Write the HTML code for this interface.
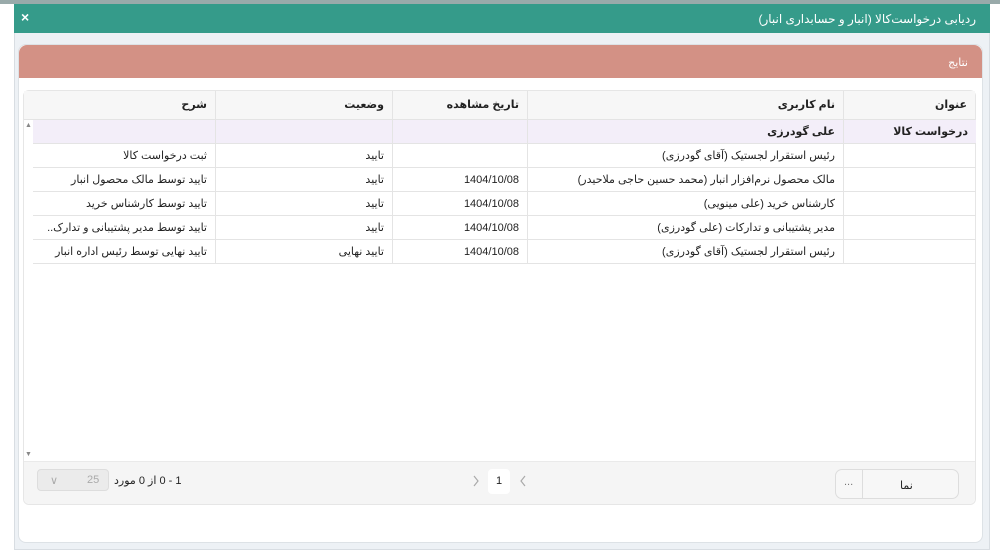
<!DOCTYPE html>
<html><head><meta charset="utf-8"><style>
*{box-sizing:border-box;margin:0;padding:0}
body{width:1000px;height:550px;background:#fff;position:relative;overflow:hidden;font-family:"Liberation Sans","DejaVu Sans",sans-serif;font-size:11px;color:#222}
.a{position:absolute}
.top{left:0;top:0;width:1000px;height:4px;background:#9aa}
.modal{left:14px;top:4px;width:976px;height:546px;background:#edf1f5;border:1px solid #d8dde2}
.hdr{left:14px;top:4px;width:976px;height:29px;background:#359b8a;color:#fff}
.panel{left:18px;top:44px;width:965px;height:499px;background:#fff;border-radius:8px;border:1px solid #dde2e6}
.sal{left:19px;top:45px;width:963px;height:33px;background:#d39185;border-radius:8px 8px 0 0;color:#fff}
.tbl{left:23px;top:90px;width:953px;height:415px;border:1px solid #e6e6e6;border-radius:6px;background:#fff}
.row{position:absolute;left:33px;width:943px;height:24px;border-bottom:1px solid #e4e4e4}
.c{position:absolute;top:0;height:100%;border-left:1px solid #e4e4e4;direction:rtl;text-align:right;padding-right:8px;line-height:24px;white-space:nowrap;overflow:hidden}
.foot{left:24px;top:461px;width:951px;height:43px;background:#f5f5f5;border-top:1px solid #eaeaea;border-radius:0 0 6px 6px}
</style></head><body>
<div class="a top"></div>
<div class="a modal"></div>
<div class="a hdr"><span class="a" style="left:7px;top:5px;font-size:14px;font-weight:bold">×</span><span class="a" style="right:14px;top:8px;font-size:12px;direction:rtl">ردیابی درخواست‌کالا (انبار و حسابداری انبار)</span></div>
<div class="a panel"></div>
<div class="a sal"><span class="a" style="right:14px;top:11px;font-size:11px">نتایج</span></div>
<div class="a tbl"></div>
<div class="a" style="left:24px;top:91px;width:951px;height:29px;background:#f7f7f7;border-bottom:1px solid #e4e4e4;font-weight:bold;font-size:11px">
 <div class="c" style="left:819px;width:132px;line-height:29px;border-left:1px solid #e4e4e4">عنوان</div>
 <div class="c" style="left:503px;width:316px;line-height:29px">نام کاربری</div>
 <div class="c" style="left:368px;width:135px;line-height:29px">تاریخ مشاهده</div>
 <div class="c" style="left:191px;width:177px;line-height:29px">وضعیت</div>
 <div class="c" style="left:0;width:191px;line-height:29px;border-left:0">شرح</div>
</div>
<span class="a" style="left:25px;top:122px;font-size:7px;color:#888">▲</span>
<span class="a" style="left:25px;top:451px;font-size:7px;color:#888">▼</span>
<div class="row" style="top:120px;background:#f3eef9;font-weight:bold">
 <div class="c" style="left:810px;width:133px">درخواست کالا</div>
 <div class="c" style="left:494px;width:316px">علی گودرزی</div>
 <div class="c" style="left:359px;width:135px"></div>
 <div class="c" style="left:182px;width:177px"></div>
 <div class="c" style="left:0;width:182px;border-left:0"></div>
</div>
<div class="row" style="top:144px">
 <div class="c" style="left:810px;width:133px"></div>
 <div class="c" style="left:494px;width:316px">رئیس استقرار لجستیک (آقای گودرزی)</div>
 <div class="c" style="left:359px;width:135px"></div>
 <div class="c" style="left:182px;width:177px">تایید</div>
 <div class="c" style="left:0;width:182px;border-left:0">ثبت درخواست کالا</div>
</div>
<div class="row" style="top:168px">
 <div class="c" style="left:810px;width:133px"></div>
 <div class="c" style="left:494px;width:316px">مالک محصول نرم‌افزار انبار (محمد حسین حاجی ملاحیدر)</div>
 <div class="c" style="left:359px;width:135px;direction:ltr">1404/10/08</div>
 <div class="c" style="left:182px;width:177px">تایید</div>
 <div class="c" style="left:0;width:182px;border-left:0">تایید توسط مالک محصول انبار</div>
</div>
<div class="row" style="top:192px">
 <div class="c" style="left:810px;width:133px"></div>
 <div class="c" style="left:494px;width:316px">کارشناس خرید (علی  مینویی)</div>
 <div class="c" style="left:359px;width:135px;direction:ltr">1404/10/08</div>
 <div class="c" style="left:182px;width:177px">تایید</div>
 <div class="c" style="left:0;width:182px;border-left:0">تایید توسط کارشناس خرید</div>
</div>
<div class="row" style="top:216px">
 <div class="c" style="left:810px;width:133px"></div>
 <div class="c" style="left:494px;width:316px">مدیر پشتیبانی و تدارکات (علی  گودرزی)</div>
 <div class="c" style="left:359px;width:135px;direction:ltr">1404/10/08</div>
 <div class="c" style="left:182px;width:177px">تایید</div>
 <div class="c" style="left:0;width:182px;border-left:0">تایید توسط مدیر پشتیبانی و تدارک..</div>
</div>
<div class="row" style="top:240px">
 <div class="c" style="left:810px;width:133px"></div>
 <div class="c" style="left:494px;width:316px">رئیس استقرار لجستیک (آقای گودرزی)</div>
 <div class="c" style="left:359px;width:135px;direction:ltr">1404/10/08</div>
 <div class="c" style="left:182px;width:177px">تایید نهایی</div>
 <div class="c" style="left:0;width:182px;border-left:0">تایید نهایی توسط رئیس اداره انبار</div>
</div>
<div class="a foot"></div>
<div class="a" style="left:37px;top:469px;width:72px;height:22px;background:#ebebeb;border:1px solid #ddd;border-radius:4px;color:#aaa;font-size:11px"><span class="a" style="left:12px;top:4px">∨</span><span class="a" style="left:49px;top:4px">25</span></div>
<span class="a" style="left:114px;top:474px;font-size:11px;direction:rtl">1 - 0 از 0 مورد</span>
<svg class="a" style="left:472px;top:475px" width="8" height="12"><path d="M2 1L6 6L2 11" fill="none" stroke="#aaa" stroke-width="1.2"/></svg>
<div class="a" style="left:488px;top:469px;width:22px;height:25px;background:#fff;border-radius:4px;text-align:center;line-height:25px;font-size:11px">1</div>
<svg class="a" style="left:519px;top:475px" width="8" height="12"><path d="M6 1L2 6L6 11" fill="none" stroke="#aaa" stroke-width="1.2"/></svg>
<div class="a" style="left:835px;top:469px;width:124px;height:30px;background:#f7f7f7;border:1px solid #ddd;border-radius:7px"><div class="a" style="left:26px;top:0;width:1px;height:28px;background:#ddd"></div><span class="a" style="left:8px;top:6px;color:#777">...</span><span class="a" style="left:64px;top:9px">نما</span></div>
</body></html>
